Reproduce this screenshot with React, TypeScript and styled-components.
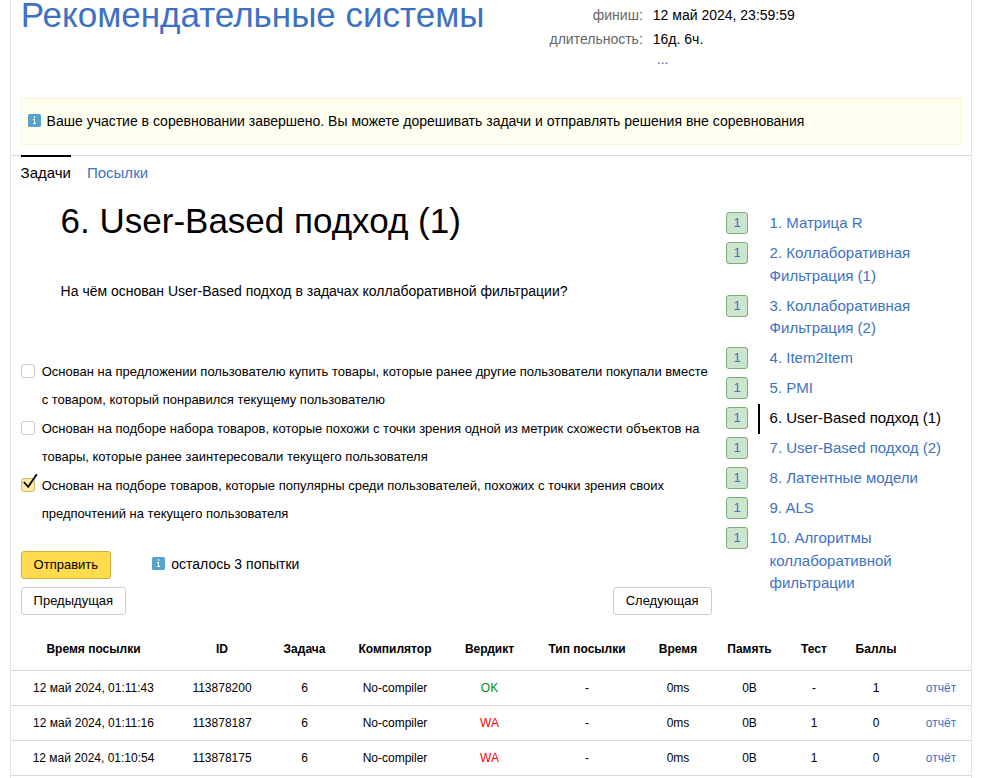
import React from "react";
import styled, { createGlobalStyle, css } from "styled-components";

const GlobalStyle = createGlobalStyle`
  *, *::before, *::after { box-sizing: border-box; }
  html, body { margin: 0; height: 100%; overflow: hidden; background: #fff; }
  body { font-family: "Liberation Sans", Arial, sans-serif; font-size: 14px; color: #000; }
  #root { height: 100%; }
`;

const Page = styled.div`
  width: 962px;
  height: 778px;
  margin-left: 10px;
  border: solid #e5e5e5;
  border-width: 0 1px;
  overflow: hidden;
`;

const Header = styled.header`
  display: grid;
  grid-template-columns: 518px 1fr;
  height: 98px;
  padding-left: 9.8px;
`;

const ContestTitle = styled.a`
  font-size: 35px;
  line-height: 30px;
  color: #3d71c4;
  text-decoration: none;
  white-space: nowrap;
`;

const ContestInfo = styled.dl`
  display: grid;
  grid-template-columns: 104px 1fr;
  grid-auto-rows: 24px;
  column-gap: 10px;
  align-content: start;
  margin: 0;
  padding-top: 3px;
  line-height: 24px;
`;

const InfoLabel = styled.dt`
  text-align: right;
  color: #666;
`;

const InfoValue = styled.dd`
  margin: 0;
`;

const MoreLink = styled.a`
  grid-column: 2;
  padding-left: 4px;
  line-height: 16px;
  color: #3d71c4;
`;

const Alert = styled.div`
  display: flex;
  align-items: center;
  gap: 5.6px;
  height: 47px;
  margin: 0 10px 10px;
  padding: 0 6px 1px;
  border: 1px solid #fbf5cf;
  background: #fffff0;
  line-height: 16px;
`;

const Tabs = styled.nav`
  display: flex;
  gap: 16px;
  height: 37px;
  padding-left: 9.6px;
  border-top: 1px solid #d9d9d9;
  font-size: 15px;
`;

const Tab = styled.a<{ $active?: boolean }>`
  margin-top: -1px;
  padding-top: 7px;
  border-top: 2px solid ${(p) => (p.$active ? "#000" : "transparent")};
  line-height: 18px;
  color: ${(p) => (p.$active ? "#000" : "#3d71c4")};
`;

const Body = styled.div`
  display: grid;
  grid-template-columns: 691px 1fr;
  column-gap: 14px;
  height: 435px;
  padding-left: 10px;
`;

const Problem = styled.main`
  display: flex;
  flex-direction: column;
`;

const ProblemTitle = styled.h1`
  margin: 9px 0 0 39.6px;
  font-size: 35px;
  font-weight: 400;
  line-height: 40px;
`;

const Statement = styled.p`
  margin: 40px 0 0 39.6px;
  line-height: 20px;
`;

const Options = styled.div`
  margin-top: 56px;
`;

const Option = styled.label`
  display: grid;
  grid-template-columns: 14px 1fr;
  column-gap: 6.7px;
  height: 57px;
  font-size: 13px;
  line-height: 28.5px;
  white-space: nowrap;
`;

const OptionText = styled.span`
  padding-top: 0.5px;
`;

const Box = styled.span<{ $checked?: boolean }>`
  width: 14px;
  height: 14px;
  margin-top: 7px;
  border: 1px solid ${(p) => (p.$checked ? "#ccb872" : "#ccc")};
  border-radius: 3px;
  background: ${(p) => (p.$checked ? "#ffeba0" : "#fff")};
`;

const Tick = styled.svg`
  display: block;
  width: 18px;
  height: 18px;
  margin: -5px 0 0 -1px;
  overflow: visible;
`;

const Actions = styled.div`
  display: flex;
  align-items: center;
  gap: 41px;
  margin-top: 23px;
`;

const Attempts = styled.span`
  display: flex;
  align-items: center;
  gap: 6px;
  padding-bottom: 2px;
  line-height: 16px;
`;

const Pager = styled.div`
  display: flex;
  justify-content: space-between;
  margin: 8px 0.4px 0 0;
`;

const Button = styled.button<{ $primary?: boolean }>`
  height: 28px;
  padding: 0 12.2px 0 11.6px;
  border: 1px solid #ccc;
  border-radius: 3px;
  background: #fff;
  font: 13px/26px "Liberation Sans", Arial, sans-serif;
  color: #000;
  ${(p) =>
    p.$primary &&
    css`
      border-color: #ccae3e;
      background: #ffdb4d;
    `}
`;

const ProblemList = styled.ul`
  margin: 16.5px 0 0;
  padding: 0;
  list-style: none;
  font-size: 15px;
  line-height: 22.5px;
`;

const ProblemItem = styled.li`
  display: grid;
  grid-template-columns: 22px 1fr;
  column-gap: 10px;
`;

const Score = styled.span`
  width: 22px;
  height: 22px;
  margin-top: 3.5px;
  border: 1px solid #7cab7c;
  border-radius: 3px;
  background: #cce5cc;
  font-size: 13px;
  line-height: 20px;
  text-align: center;
  color: #3d71c4;
`;

const ProblemLink = styled.a<{ $active?: boolean }>`
  width: 192px;
  padding: 3.75px 0 3.75px 9.6px;
  border-left: 2px solid ${(p) => (p.$active ? "#000" : "transparent")};
  color: ${(p) => (p.$active ? "#000" : "#3d71c4")};
`;

const Table = styled.table`
  width: 960px;
  table-layout: fixed;
  border-collapse: collapse;
  font-size: 12px;
  text-align: center;
`;

const HeadCell = styled.th`
  height: 43px;
  padding: 1px 0 0;
  border-bottom: 1px solid #d9d9d9;
  font-weight: 700;
`;

const Cell = styled.td<{ $tone?: string }>`
  height: 35px;
  padding: 0;
  border-bottom: 1px solid #d9d9d9;
  color: ${(p) => p.$tone ?? "#000"};
`;

const InfoSvg = styled.svg`
  flex: none;
  width: 13px;
  height: 13px;
  margin-bottom: 1px;
`;

const InfoIcon = () => (
  <InfoSvg viewBox="0 0 13 13" shapeRendering="crispEdges">
    <rect width="13" height="13" rx="1.5" fill="#57a3cc" shapeRendering="auto" />
    <path d="M6 2h1v2H6zM5 5h2v4h1v1H5V9h1V6H5z" fill="#fff" />
  </InfoSvg>
);

const options = [
  ["Основан на предложении пользователю купить товары, которые ранее другие пользователи покупали вместе", "с товаром, который понравился текущему пользователю"],
  ["Основан на подборе набора товаров, которые похожи с точки зрения одной из метрик схожести объектов на", "товары, которые ранее заинтересовали текущего пользователя"],
  ["Основан на подборе товаров, которые популярны среди пользователей, похожих с точки зрения своих", "предпочтений на текущего пользователя"],
];
const checkedOption = 2;

const problems = [
  "1. Матрица R",
  "2. Коллаборативная Фильтрация (1)",
  "3. Коллаборативная Фильтрация (2)",
  "4. Item2Item",
  "5. PMI",
  "6. User-Based подход (1)",
  "7. User-Based подход (2)",
  "8. Латентные модели",
  "9. ALS",
  "10. Алгоритмы коллаборативной фильтрации",
];
const activeProblem = 5;

const columns: [string, number][] = [
  ["Время посылки", 165],
  ["ID", 92],
  ["Задача", 73],
  ["Компилятор", 108],
  ["Вердикт", 81],
  ["Тип посылки", 114],
  ["Время", 68],
  ["Память", 75],
  ["Тест", 54],
  ["Баллы", 70],
  ["", 60],
];

const submissions = [
  { time: "12 май 2024, 01:11:43", id: "113878200", verdict: "OK", test: "-", score: "1" },
  { time: "12 май 2024, 01:11:16", id: "113878187", verdict: "WA", test: "1", score: "0" },
  { time: "12 май 2024, 01:10:54", id: "113878175", verdict: "WA", test: "1", score: "0" },
];

export default function App() {
  return (
    <>
      <GlobalStyle />
      <Page>
        <Header>
          <ContestTitle>Рекомендательные системы</ContestTitle>
          <ContestInfo>
            <InfoLabel>финиш:</InfoLabel>
            <InfoValue>12 май 2024, 23:59:59</InfoValue>
            <InfoLabel>длительность:</InfoLabel>
            <InfoValue>16д. 6ч.</InfoValue>
            <MoreLink>...</MoreLink>
          </ContestInfo>
        </Header>
        <Alert>
          <InfoIcon />
          <span>Ваше участие в соревновании завершено. Вы можете дорешивать задачи и отправлять решения вне соревнования</span>
        </Alert>
        <Tabs>
          <Tab $active>Задачи</Tab>
          <Tab>Посылки</Tab>
        </Tabs>
        <Body>
          <Problem>
            <ProblemTitle>6. User-Based подход (1)</ProblemTitle>
            <Statement>На чём основан User-Based подход в задачах коллаборативной фильтрации?</Statement>
            <Options>
              {options.map(([first, second], i) => (
                <Option key={first}>
                  <Box $checked={i === checkedOption}>
                    {i === checkedOption && (
                      <Tick viewBox="0 0 18 18">
                        <path d="M2.8 8 L7.2 12.8 L15.8 0.3" fill="none" stroke="#000" strokeWidth="1.8" />
                      </Tick>
                    )}
                  </Box>
                  <OptionText>
                    {first}
                    <br />
                    {second}
                  </OptionText>
                </Option>
              ))}
            </Options>
            <Actions>
              <Button $primary>Отправить</Button>
              <Attempts>
                <InfoIcon />
                осталось 3 попытки
              </Attempts>
            </Actions>
            <Pager>
              <Button>Предыдущая</Button>
              <Button>Следующая</Button>
            </Pager>
          </Problem>
          <ProblemList>
            {problems.map((name, i) => (
              <ProblemItem key={name}>
                <Score>1</Score>
                <ProblemLink $active={i === activeProblem}>{name}</ProblemLink>
              </ProblemItem>
            ))}
          </ProblemList>
        </Body>
        <Table>
          <colgroup>
            {columns.map(([name, width]) => (
              <col key={name} width={width} />
            ))}
          </colgroup>
          <thead>
            <tr>
              {columns.map(([name]) => (
                <HeadCell key={name}>{name}</HeadCell>
              ))}
            </tr>
          </thead>
          <tbody>
            {submissions.map((s) => (
              <tr key={s.id}>
                <Cell>{s.time}</Cell>
                <Cell>{s.id}</Cell>
                <Cell>6</Cell>
                <Cell>No-compiler</Cell>
                <Cell $tone={s.verdict === "OK" ? "#0a8a0a" : "#f00"}>{s.verdict}</Cell>
                <Cell>-</Cell>
                <Cell>0ms</Cell>
                <Cell>0B</Cell>
                <Cell>{s.test}</Cell>
                <Cell>{s.score}</Cell>
                <Cell $tone="#3d71c4">отчёт</Cell>
              </tr>
            ))}
          </tbody>
        </Table>
      </Page>
    </>
  );
}
